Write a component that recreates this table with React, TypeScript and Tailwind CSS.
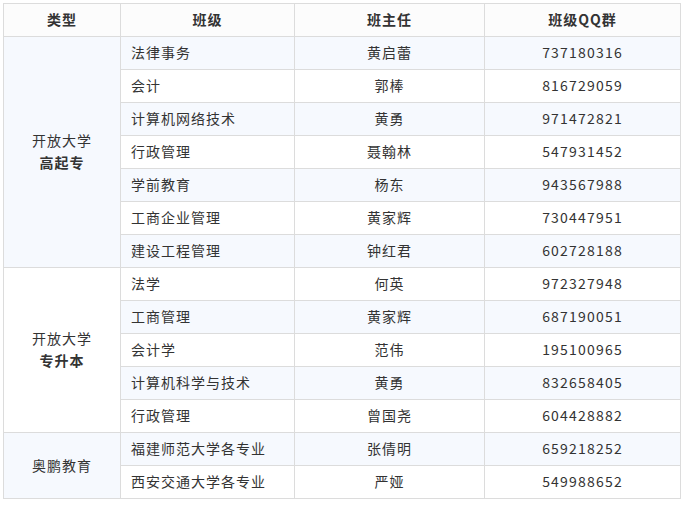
type Row = { name: string; teacher: string; qq: string };
type Group = { title: string; sub?: string; rows: Row[] };

const GROUPS: Group[] = [
  {
    title: "开放大学",
    sub: "高起专",
    rows: [
      { name: "法律事务", teacher: "黄启蕾", qq: "737180316" },
      { name: "会计", teacher: "郭棒", qq: "816729059" },
      { name: "计算机网络技术", teacher: "黄勇", qq: "971472821" },
      { name: "行政管理", teacher: "聂翰林", qq: "547931452" },
      { name: "学前教育", teacher: "杨东", qq: "943567988" },
      { name: "工商企业管理", teacher: "黄家辉", qq: "730447951" },
      { name: "建设工程管理", teacher: "钟红君", qq: "602728188" },
    ],
  },
  {
    title: "开放大学",
    sub: "专升本",
    rows: [
      { name: "法学", teacher: "何英", qq: "972327948" },
      { name: "工商管理", teacher: "黄家辉", qq: "687190051" },
      { name: "会计学", teacher: "范伟", qq: "195100965" },
      { name: "计算机科学与技术", teacher: "黄勇", qq: "832658405" },
      { name: "行政管理", teacher: "曾国尧", qq: "604428882" },
    ],
  },
  {
    title: "奥鹏教育",
    rows: [
      { name: "福建师范大学各专业", teacher: "张倩明", qq: "659218252" },
      { name: "西安交通大学各专业", teacher: "严娅", qq: "549988652" },
    ],
  },
];

const cell = "border border-[#dcdcdc] h-[33px] p-0 pb-[2px] align-middle";

export default function App() {
  let index = 0;
  return (
    <div className="w-[687px] h-[505px] bg-white pt-[3px] pl-[3px] font-['Noto_Sans_CJK_SC','Noto_Sans',sans-serif] text-[14px] tracking-[1px] text-[#333333]">
      <table className="border-collapse table-fixed w-[677px]">
        <colgroup>
          <col className="w-[117px]" />
          <col className="w-[174px]" />
          <col className="w-[190px]" />
          <col className="w-[196px]" />
        </colgroup>
        <thead>
          <tr className="bg-[#fcfcfc] font-bold">
            <th className={cn(cell, "text-center")}>类型</th>
            <th className={cn(cell, "text-center")}>班级</th>
            <th className={cn(cell, "text-center")}>班主任</th>
            <th className={cn(cell, "text-center")}>班级QQ群</th>
          </tr>
        </thead>
        <tbody>
          {GROUPS.map((g) =>
            g.rows.map((r, i) => {
              const striped = index++ % 2 === 0;
              const bg = striped ? "bg-[#f6f9fe]" : "bg-white";
              return (
                <tr key={`${g.title}-${g.sub}-${r.name}`} className={bg}>
                  {i === 0 && (
                    <td rowSpan={g.rows.length} className={cn(cell, "text-center leading-[22px]")}>
                      <div>{g.title}</div>
                      {g.sub && <div className="font-bold">{g.sub}</div>}
                    </td>
                  )}
                  <td className={cn(cell, "pl-[10px] text-left")}>{r.name}</td>
                  <td className={cn(cell, "text-center")}>{r.teacher}</td>
                  <td className={cn(cell, "text-center tracking-[1.2px]")}>{r.qq}</td>
                </tr>
              );
            }),
          )}
        </tbody>
      </table>
    </div>
  );
}

function cn(...parts: (string | false | undefined)[]) {
  return parts.filter(Boolean).join(" ");
}
